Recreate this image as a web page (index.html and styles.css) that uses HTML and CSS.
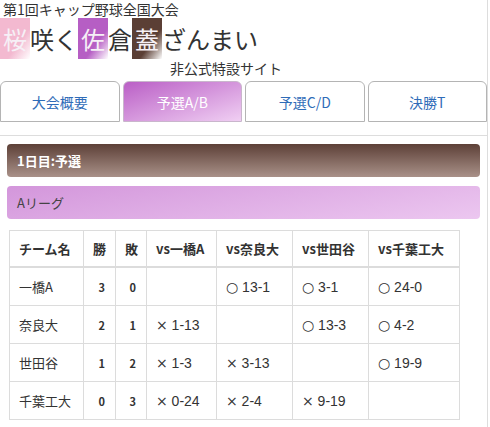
FILE: index.html
```html
<!DOCTYPE html>
<html lang="ja">
<head>
<meta charset="utf-8">
<title>桜咲く佐倉蓋ざんまい</title>
<link rel="stylesheet" href="styles.css">
</head>
<body>
<div class="page">
  <header class="site-head">
    <div class="event">第1回キャップ野球全国大会</div>
    <h1 class="title"><span class="hl hl-pink">桜</span>咲く<span class="hl hl-purple">佐</span>倉<span class="hl hl-brown">蓋</span>ざんまい</h1>
    <div class="sub">非公式特設サイト</div>
  </header>
  <nav class="tabs">
    <a class="tab" href="#">大会概要</a>
    <a class="tab active" href="#">予選A/B</a>
    <a class="tab" href="#">予選C/D</a>
    <a class="tab" href="#">決勝T</a>
  </nav>
  <main class="panel">
    <div class="day-bar">1日目:予選</div>
    <div class="league-bar">Aリーグ</div>
    <table class="standings">
      <colgroup>
        <col class="c-team"><col class="c-num"><col class="c-num2"><col class="c-vs1"><col class="c-vs"><col class="c-vs"><col class="c-vs4">
      </colgroup>
      <thead>
        <tr><th>チーム名</th><th>勝</th><th>敗</th><th>vs一橋A</th><th>vs奈良大</th><th>vs世田谷</th><th>vs千葉工大</th></tr>
      </thead>
      <tbody>
        <tr><td>一橋A</td><td class="num">3</td><td class="num">0</td><td class="score"></td><td class="score"><span class="mark">○</span> 13-1</td><td class="score"><span class="mark">○</span> 3-1</td><td class="score"><span class="mark">○</span> 24-0</td></tr>
        <tr><td>奈良大</td><td class="num">2</td><td class="num">1</td><td class="score"><span class="mark">×</span> 1-13</td><td class="score"></td><td class="score"><span class="mark">○</span> 13-3</td><td class="score"><span class="mark">○</span> 4-2</td></tr>
        <tr><td>世田谷</td><td class="num">1</td><td class="num">2</td><td class="score"><span class="mark">×</span> 1-3</td><td class="score"><span class="mark">×</span> 3-13</td><td class="score"></td><td class="score"><span class="mark">○</span> 19-9</td></tr>
        <tr><td>千葉工大</td><td class="num">0</td><td class="num">3</td><td class="score"><span class="mark">×</span> 0-24</td><td class="score"><span class="mark">×</span> 2-4</td><td class="score"><span class="mark">×</span> 9-19</td><td class="score"></td></tr>
      </tbody>
    </table>
  </main>
</div>
</body>
</html>
```
FILE: styles.css
```css
html, body {
  margin: 0;
  padding: 0;
  background: #fff;
}
body {
  font-family: "Noto Sans CJK JP", "Noto Sans", sans-serif;
  color: #333;
}
.page {
  width: 487px;
  min-height: 427px;
  border-right: 1px solid #ddd;
}
.event {
  font-size: 14px;
  line-height: 18px;
  height: 18px;
  padding-left: 3px;
  color: #333;
}
.title {
  margin: 0;
  font-size: 24px;
  font-weight: normal;
  line-height: 41px;
  height: 41px;
  color: #333;
  white-space: nowrap;
}
.hl {
  display: inline-block;
  padding: 0 3px;
  color: #f6f0f6;
}
.hl-pink {
  background: linear-gradient(to bottom right, #f3b9d0 62%, #fff 100%);
}
.hl-purple {
  background: linear-gradient(to bottom right, #b65ec4 62%, #fff 100%);
}
.hl-brown {
  background: linear-gradient(to bottom right, #5b3f35 62%, #fff 100%);
}
.sub {
  margin-left: 170px;
  font-size: 14px;
  line-height: 18px;
  color: #333;
}
.tabs {
  display: flex;
  gap: 3px;
  margin-top: 4px;
  margin-bottom: 13px;
}
.tab {
  flex: 1;
  height: 39px;
  border: 1px solid #b4b4b4;
  border-radius: 6px 6px 0 0;
  display: flex;
  align-items: center;
  justify-content: center;
  font-size: 14px;
  color: #2f6cb8;
  text-decoration: none;
  background: #fff;
}
.tab.active {
  color: #fff;
  background: linear-gradient(to bottom right, #ba5fc6, #f0cff3);
  border-color: #c9b6cc;
}
.panel {
  border-top: 1px solid #ddd;
  padding: 8px 7px 10px;
}
.day-bar, .league-bar {
  height: 33px;
  border-radius: 4px;
  padding-left: 10px;
  display: flex;
  align-items: center;
  font-size: 13px;
}
.day-bar {
  background: linear-gradient(to bottom, #5d4037, #a99189);
  color: #fff;
  font-weight: bold;
}
.league-bar {
  margin-top: 9px;
  background: linear-gradient(170deg, #d396db, #ecc7f0);
  color: #444;
}
.standings {
  margin: 11px 0 0 2px;
  border-collapse: collapse;
  table-layout: fixed;
  width: 451px;
  font-size: 13px;
  color: #333;
}
.c-team { width: 74px; }
.c-num { width: 32px; }
.c-num2 { width: 31px; }
.c-vs1 { width: 70px; }
.c-vs { width: 76px; }
.c-vs4 { width: 91px; }
.standings th, .standings td {
  border: 1px solid #dcdcdc;
  padding: 9px 8px 9px 9px;
  line-height: 18px;
  text-align: left;
  white-space: nowrap;
}
.standings th {
  font-weight: bold;
  border-bottom: 2px solid #dcdcdc;
  padding-top: 9px;
  padding-bottom: 8px;
}
.standings td.num {
  text-align: right;
  font-weight: bold;
  font-size: 11px;
  padding-right: 10px;
  vertical-align: top;
  padding-top: 10px;
}
.standings td.score {
  font-family: "Liberation Sans", "Noto Sans CJK JP", sans-serif;
  font-size: 14px;
}
.mark {
  font-family: "DejaVu Sans", sans-serif;
  font-size: 14px;
  line-height: 1;
}
```
